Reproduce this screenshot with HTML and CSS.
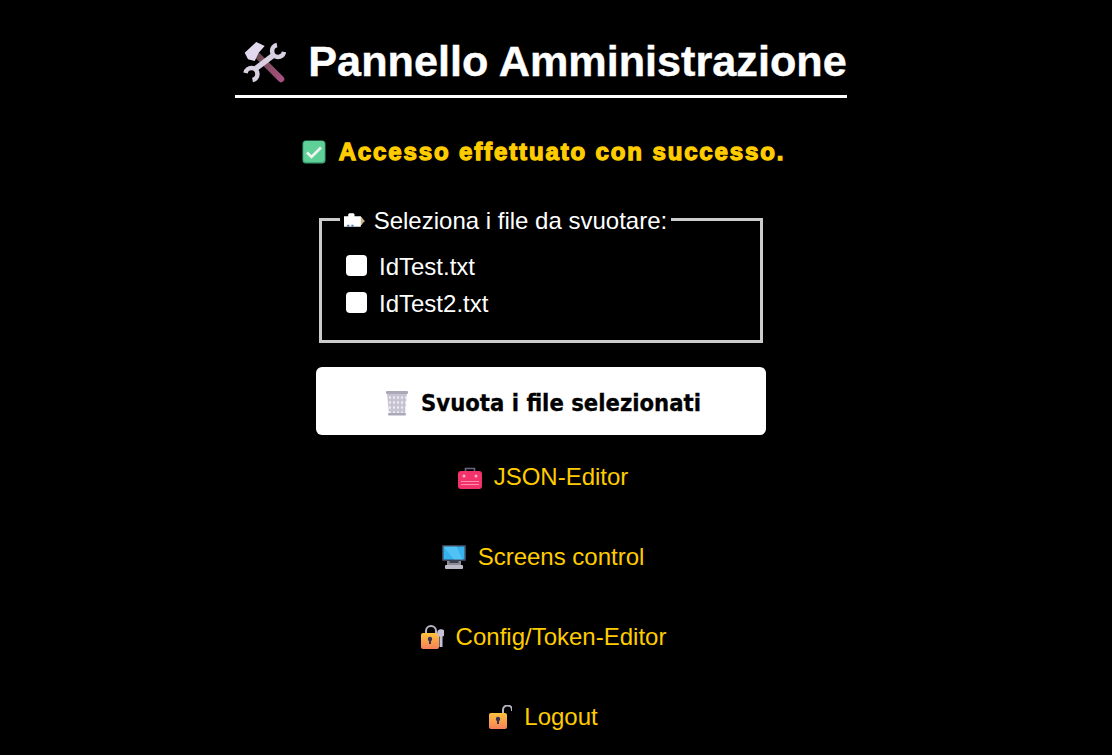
FILE: index.html
```html
<!DOCTYPE html>
<html lang="it">

<head>
  <meta charset="UTF-8">
  <meta name="viewport" content="width=device-width, initial-scale=1.0">
  <title>Pannello Amministrazione</title>
  <link rel="stylesheet" href="styles.css">
</head>

<body>
  <main class="panel">
    <h1 class="title">
      <svg class="title-icon" viewBox="0 0 44 44">
        <defs>
          <linearGradient id="handle-fill" x1="0" y1="0" x2="1" y2="1">
            <stop offset="0" stop-color="#6b4a50" />
            <stop offset="1" stop-color="#a8527f" />
          </linearGradient>
        </defs>
        <path d="M16 16L39 39" fill="none" stroke="url(#handle-fill)" stroke-width="6.500" stroke-linecap="round" />
        <path d="M2.700 12.700L14.300 2l8.400 4-6 6.700L12.700 21 6 19.300z" fill="#e2d9ee" />
        <path d="M12.700 29.300L31 15.500" fill="none" stroke="#d9d0e2" stroke-width="5.500" />
        <path d="M35 5A6 6 0 1 0 42 12" fill="none" stroke="#d9d0e2" stroke-width="4.500" />
        <path d="M3.500 33A6 6 0 1 1 10.500 40" fill="none" stroke="#d9d0e2" stroke-width="4.500" />
      </svg>
      <span>Pannello Amministrazione</span>
    </h1>

    <p class="status">
      <svg class="status-icon" viewBox="0 0 24 24">
        <rect x="0.5" y="0.5" width="23" height="23" rx="3.5" fill="#3fa877" />
        <rect x="1.5" y="1" width="21" height="21" rx="3" fill="#5fd198" />
        <path d="M5 12.500l4.500 4.500 9.500-9.500" fill="none" stroke="#f2f2f2" stroke-width="2.600" />
      </svg>
      <span>Accesso effettuato con successo.</span>
    </p>

    <form class="clear-form">
      <fieldset class="file-box">
        <legend class="file-legend">
          <svg class="legend-icon" viewBox="0 0 20 15">
            <path d="M15 3l2 1 1 1.500 2 2-2 2-1 1.500-2 1z" fill="#c9b48c" />
            <path d="M0 13V3h4V1l1-1h4l1 1v2h6v10z" fill="#fff" />
            <path d="M3 11h2v2H3zM7 11h2v2H7z" fill="#4a78b8" />
          </svg>
          Seleziona i file da svuotare:
        </legend>
        <label class="file-row"><input type="checkbox"> IdTest.txt</label>
        <label class="file-row"><input type="checkbox"> IdTest2.txt</label>
      </fieldset>

      <button type="button" class="clear-btn">
        <svg class="btn-icon" viewBox="0 0 26 26">
          <defs>
            <pattern id="bin-mesh" width="4" height="5" patternUnits="userSpaceOnUse">
              <rect width="4" height="5" fill="#c6c2d2" />
              <path d="M2 0.500l1.200 2-1.200 2-1.200-2z" fill="#eeedf3" />
            </pattern>
          </defs>
          <path d="M3 3h20l-2 21H5z" fill="url(#bin-mesh)" />
          <rect x="2" y="1" width="22" height="3" rx="1" fill="#aba8b8" />
          <rect x="4" y="23" width="18" height="2.500" rx="1" fill="#aba8b8" />
        </svg>
        Svuota i file selezionati
      </button>
    </form>

    <nav class="links">
      <a class="link" href="#">
        <svg class="link-icon" viewBox="0 0 24 24">
          <path d="M7.500 7V3.500h9V7" fill="none" stroke="#6d6482" stroke-width="1.600" />
          <rect y="6" width="24" height="18" rx="3" fill="#f2336b" />
          <circle cx="6" cy="11" r="1.500" fill="#ffb0c8" />
          <circle cx="18" cy="11" r="1.500" fill="#ffb0c8" />
          <path d="M3 16.500h18M3 19.500h18" stroke="#ff8db0" />
        </svg>
        JSON-Editor
      </a>
      <a class="link" href="#">
        <svg class="link-icon" viewBox="0 0 24 24">
          <rect y="0" width="24" height="16" rx="1" fill="#3a4152" />
          <rect x="1.500" y="1.500" width="21" height="13" fill="#35b3ee" />
          <path d="M1.500 1.500h13l6 13H12z" fill="#6fd0f7" opacity="0.5" />
          <path d="M5 16h14v4H5z" fill="#8c8a97" />
          <path d="M7.500 16h9v2h-9z" fill="#3a4152" />
          <rect x="3" y="20" width="18" height="4" rx="1" fill="#bcbac6" />
        </svg>
        Screens control
      </a>
      <a class="link" href="#">
        <svg class="link-icon" viewBox="-1 0 24 24">
          <path d="M5 11V6a5 5 0 0 1 10 0v5" fill="none" stroke="#b9b4c6" stroke-width="2" />
          <rect y="8" width="18" height="16" rx="2" fill="url(#lock-fill)" />
          <circle cx="9" cy="14" r="2.200" fill="#3b3050" />
          <rect x="8" y="14" width="2" height="5" fill="#3b3050" />
          <circle cx="20" cy="8" r="3.800" fill="#c7bfd6" />
          <rect x="18.500" y="10" width="3" height="12" fill="#c7bfd6" />
          <defs>
            <linearGradient id="lock-fill" x1="0" y1="0" x2="0" y2="1">
              <stop offset="0" stop-color="#ffc23d" />
              <stop offset="1" stop-color="#f5805a" />
            </linearGradient>
          </defs>
        </svg>
        Config/Token-Editor
      </a>
      <a class="link" href="#">
        <svg class="link-icon" viewBox="-1 0 24 24">
          <path d="M14 10V5a4.500 4.500 0 0 1 9 0v1" fill="none" stroke="#b9b4c6" stroke-width="2" />
          <rect y="8" width="18" height="16" rx="2" fill="url(#lock-fill)" />
          <circle cx="9" cy="14" r="2.200" fill="#3b3050" />
          <rect x="8" y="14" width="2" height="5" fill="#3b3050" />
        </svg>
        Logout
      </a>
    </nav>
  </main>
</body>

</html>
```

FILE: styles.css
```css
body {
  margin: 0;
  background: #000;
  color: #fff;
  font-family: "Liberation Sans", Arial, sans-serif;
}

.panel {
  display: flex;
  flex-direction: column;
  align-items: center;
  width: 1082px;
  padding-top: 33px;
}

.title {
  display: flex;
  align-items: center;
  gap: 22px;
  margin: 0;
  padding: 0 0 5px 7px;
  border-bottom: 3px solid #fff;
  font-size: 43.2px;
  line-height: 57px;
  font-weight: bold;
  -webkit-text-stroke: 0.4px #fff;
}

.title-icon {
  width: 44px;
  height: 44px;
}

.status {
  display: flex;
  align-items: center;
  gap: 13px;
  margin: 39px 0 0;
  padding-left: 5px;
  color: #ffcc00;
  font-size: 24px;
  line-height: 30px;
  font-weight: bold;
  letter-spacing: 1.87px;
  -webkit-text-stroke: 1.3px #ffcc00;
}

.status-icon {
  width: 24px;
  height: 24px;
}

.clear-form {
  display: flex;
  flex-direction: column;
  align-items: center;
  margin-top: 36px;
}

.file-box {
  box-sizing: border-box;
  width: 444px;
  height: 140px;
  margin: 0;
  padding: 13px 24px 12px;
  border: 3px solid #ccc;
  font-size: 24px;
}

.file-legend {
  margin-left: -6px;
  padding: 4px 4px 0;
  line-height: 28px;
}

.legend-icon {
  width: 21px;
  height: 16px;
  margin-right: 2px;
}

.file-row {
  display: flex;
  align-items: center;
  gap: 12px;
  height: 37px;
  font-size: 24px;
}

.file-row input {
  appearance: none;
  width: 21px;
  height: 21px;
  margin: -2px 0 0;
  background: #fff;
  border-radius: 4px;
}

.clear-btn {
  display: flex;
  align-items: center;
  justify-content: center;
  gap: 11px;
  width: 450px;
  height: 68px;
  margin-top: 24px;
  padding: 4px 0 0 3px;
  border: 0;
  border-radius: 6px;
  background: #fff;
  color: #000;
  font-family: "DejaVu Sans", sans-serif;
  font-stretch: condensed;
  font-size: 23.6px;
  font-weight: bold;
  -webkit-text-stroke: 0.3px #000;
}

.btn-icon {
  width: 26px;
  height: 26px;
}

.links {
  display: flex;
  flex-direction: column;
  align-items: center;
  gap: 50px;
  margin-top: 27px;
  padding-left: 4px;
}

.link {
  display: flex;
  align-items: center;
  gap: 12px;
  color: #ffcc00;
  font-size: 24px;
  line-height: 30px;
  text-decoration: none;
}

.link-icon {
  width: 24px;
  height: 24px;
}
```
